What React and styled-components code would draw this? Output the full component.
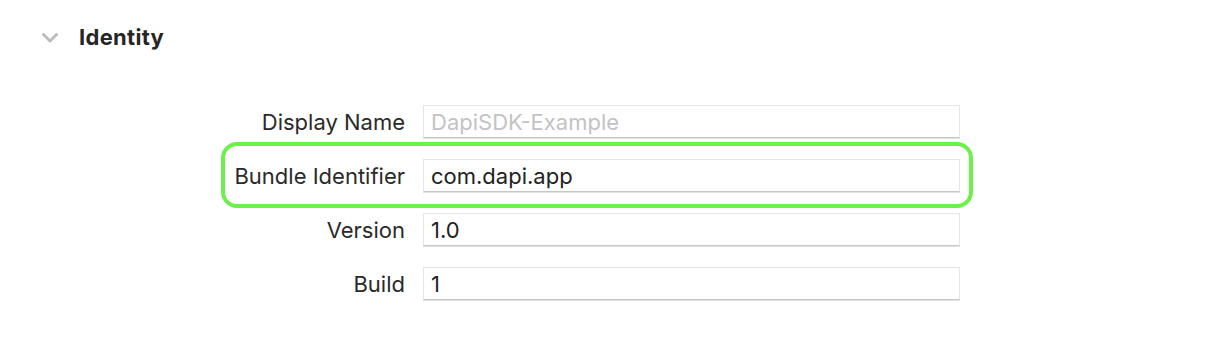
import React from 'react'
import styled, { createGlobalStyle } from 'styled-components';

const GlobalStyle = createGlobalStyle`
    body {
        margin: 0;
        background: #ffffff;
        font-family: Inter, "Liberation Sans", sans-serif;
    }
`;

const Page = styled.div`
    width: 1230px;
    height: 340px;

    background-color: #ffffff;
`;

const SectionHeader = styled.div`
    height: 25px;

    padding-top: 24px;
    padding-left: 42px;

    display: flex;
    flex-direction: row;
    align-items: center;
    gap: 21px;
`;

const Chevron = styled.svg`
    width: 16px;
    height: 10px;
    margin-top: 2px;
`;

const SectionTitle = styled.div`
    font-size: 22px;
    font-weight: 700;
    color: #262626;
    letter-spacing: 0.3px;
`;

const Form = styled.div`
    margin-top: 56px;

    display: flex;
    flex-direction: column;
    gap: 21px;
`;

const Row = styled.div`
    position: relative;

    display: flex;
    flex-direction: row;
    align-items: center;

    &::before {
        content: '';
        display: ${props => props.$highlight ? 'block' : 'none'};
        position: absolute;
        left: 221px;
        top: -17px;
        width: 752px;
        height: 66px;
        box-sizing: border-box;

        border: 4px solid #6cf04a;
        border-radius: 16px;
        pointer-events: none;
    }
`;

const Label = styled.div`
    width: 405px;

    text-align: right;
    font-size: 22px;
    color: #2a2a2a;
    white-space: nowrap;
`;

const Field = styled.div`
    width: 537px;
    height: 33px;
    box-sizing: border-box;

    margin-left: 18px;
    padding-left: 7px;

    display: flex;
    align-items: center;

    border: 1px solid #e6e6e6;
    border-bottom-color: #c6c6c6;
    box-shadow: 0 1px 0 #e2e2e2;

    font-size: 22px;
    color: ${props => props.$placeholder ? '#c3c3c3' : '#222222'};
    white-space: nowrap;
`;

const fields = [
    { label: 'Display Name', value: 'DapiSDK-Example', placeholder: true },
    { label: 'Bundle Identifier', value: 'com.dapi.app', highlight: true },
    { label: 'Version', value: '1.0' },
    { label: 'Build', value: '1' },
];

export default function App() {
    return (
        <Page>
            <GlobalStyle />
            <SectionHeader>
                <Chevron viewBox="0 0 16 10">
                    <path d="M1.5 1.5 L8 8 L14.5 1.5" fill="none" stroke="#bdbdbd" strokeWidth="3" strokeLinecap="round" strokeLinejoin="round" />
                </Chevron>
                <SectionTitle>Identity</SectionTitle>
            </SectionHeader>

            <Form>
                {fields.map((f) => (
                    <Row key={f.label} $highlight={f.highlight}>
                        <Label>{f.label}</Label>
                        <Field $placeholder={f.placeholder}>{f.value}</Field>
                    </Row>
                ))}
            </Form>
        </Page>
    );
}
